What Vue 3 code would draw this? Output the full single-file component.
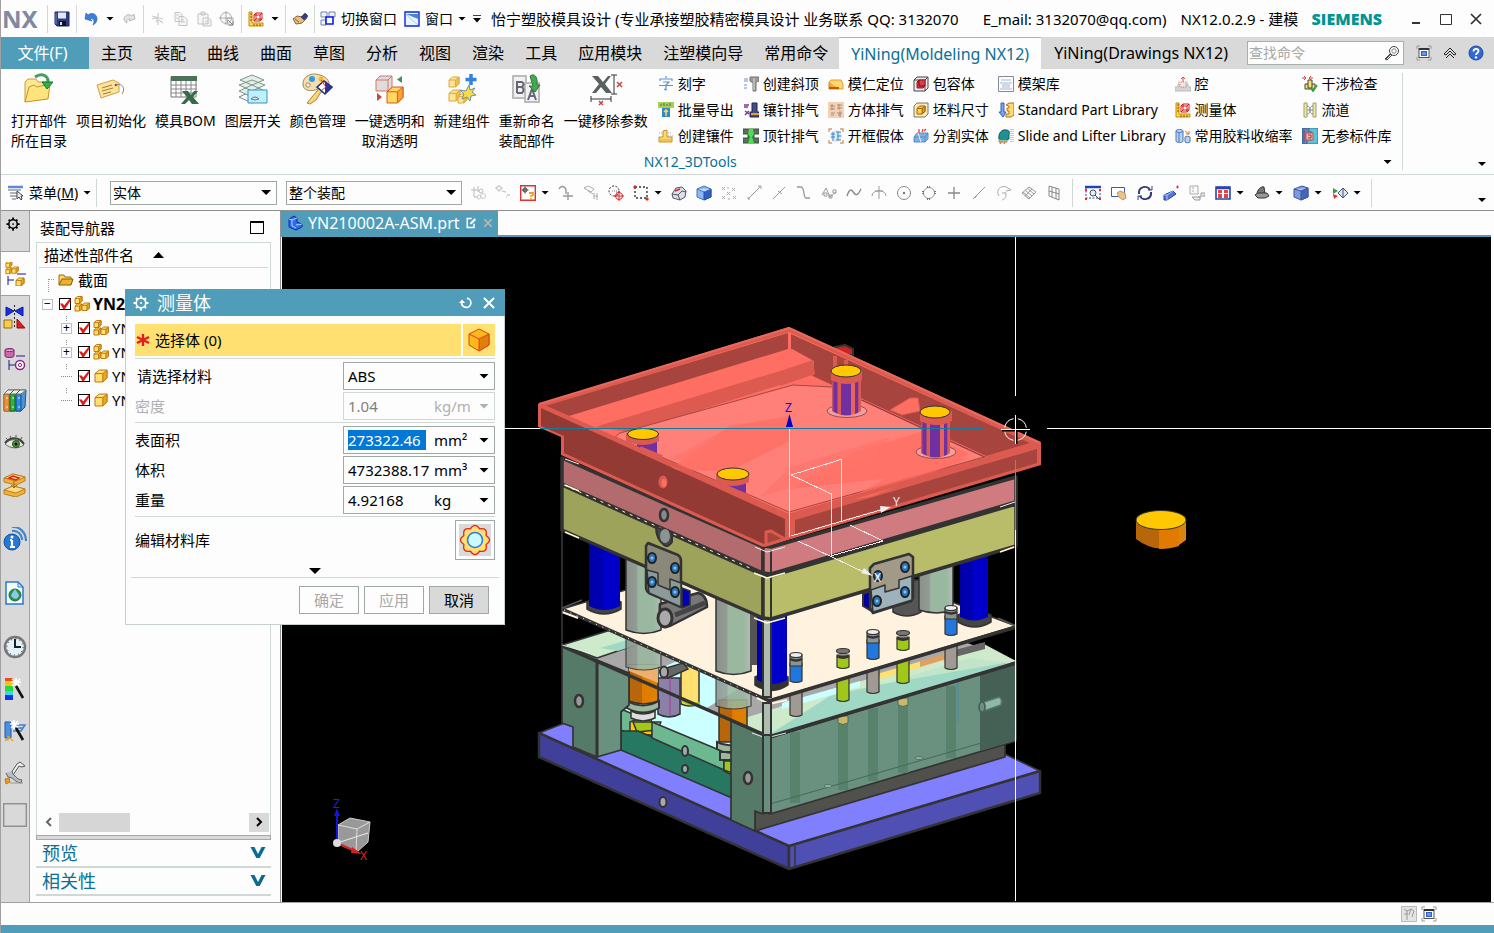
<script setup>
import { ref } from 'vue'

const cube = (x, y, s, a = '#ffe070', b = '#e8a820', c = '#c07810') =>
  `<path d="M${x} ${y + s * 0.3}l${s * 0.35} ${-s * 0.3}h${s * 0.65}v${s * 0.65}l${-s * 0.35} ${s * 0.35}h${-s * 0.65}z" fill="${a}" stroke="${c}"/><path d="M${x + s * 0.65} ${y + s * 0.3}l${s * 0.35} ${-s * 0.3}v${s * 0.65}l${-s * 0.35} ${s * 0.35}z" fill="${b}" stroke="${c}"/><path d="M${x} ${y + s * 0.3}h${s * 0.65}" stroke="${c}"/>`
const asmIcon = cube(1, 0.5, 7) + cube(1, 8, 7) + cube(8, 7, 7.5)
const measureIcon = '<path d="M1 1h3v11h11v3H1z" fill="#ffd94d" stroke="#c98a00"/><path d="M2 3h2M2 6h2M2 9h2M6 13v2M9 13v2M12 13v2" stroke="#8a5200"/><path d="M6 4l2-2h6v6l-2 2H6zM6 4h6v6M12 4l2-2M8 2v6h6M8 8l-2 2" stroke="#d01818"/>'
const frameIcon = '<path d="M1 4V1h3M12 1h3v3M15 12v3h-3M4 15H1v-3" stroke="#999"/><rect x="3" y="3.500" width="10" height="9" fill="#fff" stroke="#555"/><path d="M3 4h10" stroke="#333" stroke-width="2"/><rect x="5.500" y="6.500" width="5" height="4" fill="#5f96f0" stroke="#2d62c8"/>'

const polar = (r, deg) => {
  const a = (deg * Math.PI) / 180
  return `${(16 + r * Math.sin(a)).toFixed(1)} ${(16 - r * Math.cos(a)).toFixed(1)}`
}
const rosette = 'M' + polar(12, -22.5) + Array.from({ length: 8 }, (_, k) => `Q${polar(18, k * 45)} ${polar(12, k * 45 + 22.5)}`).join('') + 'z'

const icons = {
  save: '<path d="M1 1h14v14H3l-2-2z" fill="#2c3c86" stroke="#1d2760"/><path d="M4 1.500h8v6H4z" fill="#e6e9f8" stroke="none"/><path d="M5 10h7v5H5z" fill="#111" stroke="none"/><path d="M6 11h2v3H6z" fill="#ddd" stroke="none"/><path d="M2 2v11" stroke="#7484d8"/>',
  undo: '<path d="M2 8l1-6 2 2c4-3 9-1 9 4 0 3-2 5-4 6 2-4 1-7-3-6l2 2z" fill="#3d7ed8" stroke="#1c57b0" stroke-width=".6"/>',
  redo: '<path d="M14 8l-1-5-2 2c-4-3-8 0-8 3 0 2 1 3 3 4-1-3 1-4 3-4l-1 2z" fill="#e4e4e4" stroke="#bbb"/>',
  cut: '<path d="M2 5l11 3M8 2v12M2 8l3-1 3 1-2 3M9 9l4 3" stroke="#ccc" stroke-width="1.200"/>',
  copy: '<path d="M2 1.500h5l2 2v7H2z M6 5.500h5l3 3v6H6z" fill="#f6f6f6" stroke="#c4c4c4"/><path d="M8 9h3M8 11h4M3 4h3M3 7h2" stroke="#ccc"/>',
  paste: '<path d="M2 3h10v10H2z M5 1h4v3H5z M7 7h5l3 2v6H7z" fill="#f6f6f6" stroke="#c4c4c4"/><path d="M9 10h4M9 12h4" stroke="#ccc"/>',
  move: '<circle cx="7" cy="7" r="5.500" stroke="#aaa"/><path d="M7 0v14M0 7h12M8 7h6v7H9z" stroke="#aaa"/><path d="M9 9l5 5M14 10v4h-4" stroke="#888"/>',
  measure: measureIcon,
  hand: '<path d="M1 8l4-3 5 1 4-3 1 4-5 5-6 1z" fill="#e6bd86" stroke="#8b6330"/><path d="M9 6l4-4 3 3-4 4z" fill="#2c3f98" stroke="#1a2770" stroke-width=".5"/><path d="M3 8l4 3" stroke="#8b6330"/>',
  switch: '<path d="M1 1h6v5H1zM9 1h6v5H9zM1 9h5v5H1z" fill="#eef2fa" stroke="#7088a8"/><path d="M6 6h7v7H6z" fill="#fff" stroke="#0a1cf0" stroke-width="1.600"/>',
  window: '<path d="M1 1h14v14H1z" fill="#eaf4fc" stroke="#0a24e8" stroke-width="1.400"/><path d="M2 3h12v5z" fill="#4a86c8" stroke="none"/><path d="M2 3.500L14 14" stroke="#a8cce8"/>',
  frame: frameIcon,
  up: '<path d="M2 9l6-6 6 6-2 1-4-4-4 4zM4 13l4-4 4 4" stroke="#222"/>',
  help: '<circle cx="8" cy="8" r="7" fill="#2f6bd8" stroke="#1d479c"/><path d="M5.500 6.500c0-3.500 5-3.500 5-.5 0 2-2.500 2-2.500 4" stroke="#fff" stroke-width="1.800"/><circle cx="8" cy="12.400" r="1.200" fill="#fff" stroke="none"/>',
  search: '<circle cx="10" cy="6" r="4.500" stroke="#444"/><circle cx="10" cy="6" r="2.200" stroke="#888"/><path d="M7 9l-5 5M6 9l-5 5 2 1 5-5" stroke="#444"/>',
  char: '<path d="M8 0v2M2 5V3h12v2M5 6h6L8 9v5l-2-1M1 9.500h14" stroke="#5f90d8" stroke-width="1.200"/>',
  batch: '<path d="M0 0h16v6H0z" fill="#a8cc58" stroke="none"/><path d="M3 2v2M6 1v3M9 2v2M12 1v3" stroke="#4f7024"/><path d="M4 6h8v9H4z" fill="#2b8bc8" stroke="none"/><path d="M8 14V8M6 10l2-2 2 2" stroke="#ffd24a" stroke-width="1.600"/>',
  insert: '<path d="M1 14V9h4V3l4-1v7h5v5z" fill="#ffd872" stroke="#c49022"/><path d="M10 5h4M10 8h5M1 5h3" stroke="#aaa" stroke-dasharray="1 1"/><path d="M2 12h12" stroke="#e8a820"/>',
  lifter: '<path d="M7 1h9v4l-3 1v9h-3V7L7 5z" fill="#999" stroke="#777"/><path d="M1 3h4M1 5h4M1 9h3M1 12h3" stroke="#6b93c4"/><path d="M11 2v12" stroke="#ddd"/>',
  needle: '<path d="M9 1h5v9h2v5H7v-5h2z" fill="#454b84" stroke="#23254e"/><path d="M8 12h8" stroke="#d6a52a" stroke-width="2"/><path d="M1 3h5M1 5h4M2 9l4 3M6 9l-4 4" stroke="#7c3a8c" stroke-width="1.500"/>',
  ejector: '<path d="M0 1h16v5h-5v4h5v5H0v-5h5V6H0z" fill="#56705a" stroke="#3b523e"/><path d="M6 1h4l1 5-2 3 2 6H5l2-6-2-3z" fill="#49e050" stroke="none"/>',
  core: '<path d="M1 6h10v7H1z" fill="#f2a93a" stroke="#c98a3a"/><path d="M1 6l2-2h10l2 4v5h-4" fill="#ffd56a" stroke="#d8a040"/><path d="M1 12h10" stroke="#b86000" stroke-width="2"/>',
  vent: '<path d="M0 0h16v16H0z" fill="#f3d1b4" stroke="none"/><path d="M2 4h5M2 7h5M4 2v6M9 3h5M9 6h5M11 2v6M3 11h4M3 13h3M9 11h5M10 13h3M12 9v6" stroke="#a88c78"/>',
  pocket: '<circle cx="8" cy="8" r="6" fill="#dfe9f3" stroke="none"/><path d="M5 4v9M3 6h4M3 9h4M8 4h5M8 12h5M9 8h4M10 4v8" stroke="#3a85c8"/><path d="M1 4V1h3M12 1h3v3M15 12v3h-3M4 15H1v-3" stroke="#c8a078" stroke-width="1.400"/>',
  bound: '<path d="M1 4l3-3h11v11l-3 3H1zM1 4h11v11M12 4l3-3" fill="#eee" stroke="#444"/><path d="M4 6l2-2h6v6l-2 2H4z" fill="#d8414b" stroke="#9a1620"/><path d="M6 4v6h6" stroke="#6e0c14"/>',
  blank: '<path d="M1 4l3-3h11v11l-3 3H1z" fill="#fbe9bd" stroke="#777"/>' + cube(4, 4, 8, '#ffd24a', '#eaa010', '#9a6200'),
  split: '<path d="M1 9l3-4h11v6l-3 3H1z" fill="#7fb0e4" stroke="#5a8cc0"/><path d="M1 9h11v5M12 9l3-4" stroke="#5a8cc0"/><path d="M6 5V1M9 4l1-3M11 3l2-2" stroke="#e23838" stroke-width="1.200"/><path d="M5 5l3 9" stroke="#eef"/>',
  base: '<path d="M.5 .5h15v15H.5z" fill="#fafcff" stroke="#889"/><path d="M3 4h10M2 7h12M4 9h8M4 11h8M2 13h12" stroke="#a8b8cc"/>',
  stdpart: '<path d="M3 1h3v9h2l-3 5-4-5h2z" fill="#7da2e8" stroke="#3a62b8"/><path d="M8 3l3-2h5v12l-3 2H8v-3h3V9H9V6h2V4z" fill="#ffd871" stroke="#a87618"/>',
  slide: '<path d="M1 11C0 5 4 1 8 2c3 0 4 2 3 4v5l-4 1z" fill="#218f93" stroke="#0f5c61"/><path d="M1 12h8v2H1z" fill="#c8e8d0" stroke="#888"/><path d="M2 16l2-3M6 16l1-3" stroke="#e08a20" stroke-width="1.600"/><path d="M13 1v14M15 1v14" stroke="#999" stroke-dasharray="1 1"/>',
  cavity: '<path d="M0 15v-4h3V8h2v3h6V8h2v3h3v4z" fill="#d5d5d5" stroke="#bbb"/><path d="M5 11V6h6v5z" fill="#f6e2e0" stroke="#b99" stroke-dasharray="1 1"/><path d="M8 6V1M6 3l2-2 2 2" stroke="#e25030"/><path d="M3 6h2M11 6h2" stroke="#cc6"/>',
  shrink: '<path d="M1 3c0-2 7-2 7 0v10c0 2-7 2-7 0z" fill="#b8d2f4" stroke="#4a78ba"/><path d="M1 3c0 2 7 2 7 0M4 4v10" stroke="#4a78ba"/><path d="M10 9c0-1 5-1 5 0v5c0 1-5 1-5 0z" fill="#b8d2f4" stroke="#4a78ba"/><path d="M10 3l4 3M14 3v3h-3" stroke="#d87a20"/>',
  interfere: '<path d="M3 8h3V4h4v4h3v5H3z" fill="#f8e070" stroke="#444"/><path d="M6 8v4h4V8" stroke="#444"/><path d="M0 2h4M7 2h4M2 0l2 2-2 2M9 0L7 2l2 2" stroke="#d04545"/><path d="M9 12l2 3 4-6" stroke="#20a830" stroke-width="1.800"/>',
  runner: '<path d="M2 1h3v14H2zM11 1h3v14h-3z" fill="#f4e98c" stroke="#9aa080"/><path d="M5 4c3 0 3 3 3 4s0 4-3 4M11 4c-3 0-3 3-3 4s0 4 3 4M5 8h6" stroke="#889"/>',
  lib: '<path d="M0 0h9v16H0z" fill="#5a86c4" stroke="#33517f"/><path d="M7 0h9v16H5v-4h5V4H7z" fill="#58c4dc" stroke="#3a6f8f"/><path d="M4 5h7v7H4z" fill="#eab4b4" stroke="#c05555"/><path d="M6 7h3v3H6M2 2v12" stroke="#a33"/>',
  menu: '<path d="M0 5h13M2 8h7M2 11h7M4 14h4" stroke="#667" stroke-width="1.200"/><path d="M0 2h15" stroke="#5f88dc" stroke-width="2.500"/><path d="M9 6v8l2-2 2 3 1-1-1-3h2z" fill="#eee" stroke="#444"/>',
  t1: '<path d="M4 2v10h4M1 5h7M8 1v6" stroke="#bbb"/><circle cx="11" cy="6" r="2" stroke="#bbb"/><circle cx="13" cy="11" r="2.500" stroke="#ccc"/><circle cx="9" cy="12" r="2" stroke="#ccc"/>',
  t2: '<path d="M1 3l3 3 3-3-3-2zM7 6l4 1M12 10h3M11 12h1" stroke="#ccc" stroke-width="1.500"/>',
  t3: '<path d="M.7 .7h14.600v14.600H.7z" fill="#fff" stroke="#e03030" stroke-width="1.400"/><circle cx="5" cy="5" r="2" stroke="#444"/><path d="M5 1.500v7M1.500 5h7" stroke="#444"/><path d="M9 8h4v2l-2 1v1M11 13v1" stroke="#f0a020" stroke-width="1.800"/>',
  t4: '<path d="M1 4c2-4 6-3 7 1v4M5 11h10M10 7v8" stroke="#999" stroke-width="1.400"/>',
  t5: '<path d="M1 3l4-2 6 3-3 3zM5 6l5 3M11 8v6M11 11h4M14 8v7" stroke="#aaa"/>',
  t6: '<circle cx="6" cy="6" r="5" stroke="#333" stroke-dasharray="2 1.500"/><path d="M4 6h5v4" stroke="#777" stroke-dasharray="1 1"/><circle cx="11" cy="11" r="3.500" stroke="#e02424"/><path d="M11 6v10M6 11h10" stroke="#e02424"/>',
  t7: '<path d="M2 2h12v11H2z" stroke="#333" stroke-width="1.400" stroke-dasharray="2 2"/><path d="M1 1h2v2H1zM13 13h2v2h-2z" fill="#e02424" stroke="#e02424"/>',
  t8: '<path d="M1 9l4-6 6-1 4 4-1 6-5 3-7-2z" fill="#dbe1e8" stroke="#556"/><path d="M1 9l6 1 4-4 4 1M7 10l2 5" stroke="#556"/><path d="M4 6l5-2" stroke="#d23" stroke-width="1.600"/>',
  t9: '<path d="M1 4l7-3 7 3v8l-7 3-7-3z" fill="#8db8f4" stroke="#4572b8"/><path d="M8 7l7-3v8l-7 3z" fill="#2d61c8" stroke="#274f9c"/><path d="M1 4l7 3 7-3" fill="#c6dcff" stroke="#4572b8"/>',
  t10: '<path d="M1 2l3 3M4 2L1 5M11 3l3 3M14 3l-3 3M6 7l3 3M9 7l-3 3M1 11l3 3M4 11l-3 3M12 11l3 3M15 11l-3 3M7 2v2M8 13v2" stroke="#aaa"/>',
  t11: '<path d="M2 14L14 2M1 13h2v2M12 1h3v3" stroke="#999"/>',
  t12: '<path d="M2 14L14 2M7 6l4 3" stroke="#999"/>',
  t13: '<path d="M1 2h4c4 0 2 11 5 11h4" stroke="#999" stroke-width="1.300"/>',
  t14: '<path d="M1 10L5 3l4 9 6-5M3 8h3v3H3zM8 10h3v3H8zM12 5h3v3h-3z" stroke="#999"/>',
  t15: '<path d="M1 11c3-9 5-6 7-3s4 2 7-4" stroke="#888" stroke-width="1.400"/>',
  t16: '<path d="M1 11C1 4 15 4 15 11M8 1v13M4 6h8" stroke="#999"/>',
  t17: '<circle cx="8" cy="8" r="6.500" stroke="#888"/><circle cx="8" cy="8" r="1.200" fill="#777" stroke="none"/>',
  t18: '<circle cx="8" cy="8" r="5.500" stroke="#999"/><path d="M6 2h4M6 14h4M2 6v4M14 6v4" stroke="#777" stroke-width="2" stroke-dasharray="1 1"/>',
  t19: '<path d="M8 2v12M2 8h12" stroke="#888" stroke-width="1.300"/>',
  t20: '<path d="M2 14L14 2M4 13l2-3" stroke="#999"/>',
  t21: '<path d="M3 11C-1 5 5 0 10 2l5 3-5 1M9 7c2 2 1 7-3 8M6 8h3" stroke="#aaa"/>',
  t22: '<path d="M1 8l7-6 7 5-7 7zM4 5l7 6M6 3l7 6M4 11l7-7M2 7l7 6" stroke="#999"/>',
  t23: '<path d="M3 1l10 3v11L3 11zM3 6l10 3M6 2v10M10 3v11" stroke="#888"/>',
  v1: '<path d="M1 2v11h14V2" fill="#fff" stroke="#2244b8" stroke-dasharray="2 1.500"/><path d="M0 2h16" stroke="#2244b8" stroke-width="2.500"/><circle cx="8" cy="8" r="3" fill="#def" stroke="#456"/><path d="M10 10l4 4" stroke="#456"/><path d="M0 14h2M14 14h2M0 5h2M14 5h2" stroke="#e23" stroke-width="2"/>',
  v2: '<path d="M.5 2.500h13v9H.5z" fill="#fff" stroke="#3a5ab8"/><path d="M6 8l3-2 5 2 1 5-3 2-4-3z" fill="#eac48e" stroke="#c29656"/>',
  v3: '<path d="M2 9c-1-8 9-9 11-4M14 7c1 8-9 9-11 4" stroke="#333c78" stroke-width="2"/><path d="M11 5h4V1M5 11H1v4" fill="none" stroke="#333c78"/>',
  v4: '<path d="M1 10l9-4 3 3-9 6H1z" fill="#5478dc" stroke="#24408f"/><path d="M1 10h3v5M4 10l6-4" stroke="#a9c0ff"/><path d="M13 2h3M14.500 .5v3" stroke="#e03030"/>',
  v5: '<path d="M1 1h8v8H1zM3 3h2M3 6h2" fill="#fafafa" stroke="#aaa"/><path d="M9 12h3V8h4v3h-3M3 12h8v3H6z" fill="#eee" stroke="#999"/>',
  v6: '<path d="M1 2h14v12H1z" fill="#fff" stroke="#2744b0" stroke-width="1.600"/><path d="M1 3h14" stroke="#2744b0" stroke-width="2.500"/><path d="M3 5h4v3H3zM3 9h4v4H3zM9 5h4v3H9zM9 9h4v4H9z" fill="#e24444" stroke="none"/>',
  v7: '<path d="M3 9C3 5 7 1 10 2l1 7z" fill="#777" stroke="#333"/><path d="M1 10l3-2h9l2 3-4 2H4z" fill="#999" stroke="#333"/>',
  v8: '<path d="M1 4l8-3 6 2v9l-7 3-7-3z" fill="#7d9ce0" stroke="#3c58a0"/><path d="M8 6l7-3v9l-7 3z" fill="#4667b8" stroke="#3c58a0"/><path d="M1 4l7 2 7-3" fill="#a8c2f2" stroke="#3c58a0"/>',
  v9: '<path d="M1 3l5 3-5 3z" fill="#30a040" stroke="none"/><path d="M1 9l5 2-4 3z" fill="#d33" stroke="none"/><path d="M6 8l5-5 5 5-5 5z" fill="#dde6f6" stroke="#456"/><path d="M11 3v10" stroke="#456"/>',
  flags: '<path d="M.5 .5h15v15H.5z" fill="#e4e4e4" stroke="#bbb"/><path d="M3 3l3 2v9M6 5l4-2-2 6M10 3l3 2-2 6M3 8h4" stroke="#999"/>',
  asm: asmIcon,
  part: cube(2, 2, 12),
  folder: '<path d="M1 13V3h5l1 2h6v3" fill="#fbd66c" stroke="#9b6d10"/><path d="M1 13l3-6h11l-2 6z" fill="#f0b030" stroke="#8c5c06"/>',
  doc: '<path d="M2 4l5-3 3 2v4l5 2v3l-6 3-7-3z" fill="#2d6bf0" stroke="#0f2cb0"/><path d="M2 4l3 1v6l4 2M5 5l5-2M9 10l6-1" stroke="#b3d0ff"/>',
  edit: '<path d="M9 2H3v12h9V9" stroke="#fff" stroke-width="2"/><path d="M7 9l1-2 5-5 1 2-5 5z" fill="#fff" stroke="#fff"/>',
  x: '<path d="M3 3l10 10M13 3L3 13" stroke="currentColor" stroke-width="2"/>',
  reset: '<path d="M3 7.500a5.300 5.300 0 1 0 6-5" stroke="#fff" stroke-width="2"/><path d="M0 8l3.500-4L7 8z" fill="#fff" stroke="none"/>',
  gear: '<circle cx="8" cy="8" r="4.800" stroke="currentColor" stroke-width="1.700"/><circle cx="8" cy="8" r="1" fill="currentColor" stroke="none"/><path d="M8 .5v3M8 12.500v3M.5 8h3M12.500 8h3M3 3l1.500 1.500M11.500 11.500L13 13M13 3l-1.500 1.500M4.500 11.500L3 13" stroke="currentColor" stroke-width="2"/>',
  chevron: '<path d="M.5 2h4L8 9l3.500-7h4L9.700 13H6.300z" fill="#0a6c92" stroke="none"/>',
}

const bigIcons = {
  open: '<path d="M3 29V9l3-3h8l2 3h9v6" fill="#fbe796" stroke="#c9a030"/><path d="M3 29l4-15 5-2 3 2 13-3-2 15z" fill="#ffe37d" stroke="#c59524"/><path d="M13 4c7-5 14-1 13 6" stroke="#4c9a62" stroke-width="3"/><path d="M20 9h11l-6 7z" fill="#2bb34a" stroke="#17762b"/>',
  tag: '<path d="M3 12l16-5 6 3v9L7 25z" fill="#fce39a" stroke="#d0a044"/><path d="M8 15l10-3M8 18l11-3M9 21l8-2" stroke="#a47b3a"/><circle cx="22" cy="12" r="1.300" fill="#b33" stroke="none"/><path d="M22 12c6-3 10 4 6 9" stroke="#888"/>',
  bom: '<path d="M3 4h25v20H3z" fill="#fff" stroke="#777"/><path d="M3 3h26v5H3z" fill="#4c7257" stroke="none"/><path d="M3 12h26M3 16h26M3 20h26M8 8v16M13 8v16M18 8v16M23 8v16" stroke="#888"/><path d="M14 18h6l3 4 3-4h4l-5 6 6 7h-7l-3-4-4 4h-4l6-7z" fill="#37694a" stroke="none"/>',
  layers: '<path d="M3 24l13-6 13 6-13 6z" fill="#f4f8f6" stroke="#789"/><path d="M3 18l13-6 13 6-13 6zM3 12l13-5 13 5-13 6zM4 7l12-5 12 5-12 5z" fill="#e3efe8" stroke="#7c958a"/><path d="M12 17h19v13H12z" fill="#bdf0fa" stroke="#3a93c4"/><path d="M15 26q4-4 8 0-4 2-8 0z" fill="#d8e8f0" stroke="#678"/>',
  palette: '<path d="M2 12C1 3 11-1 19 2c8 2 11 9 8 12-3 2-6-1-9 1-3 3-15 5-16-3z" fill="#f2dfb1" stroke="#a88a50"/><circle cx="11" cy="6" r="3" fill="#2e9be0" stroke="none"/><circle cx="20" cy="6" r="2.500" fill="#f3b728" stroke="none"/><circle cx="7" cy="12" r="2.200" fill="#eee" stroke="#a88a50"/><path d="M20 12l-4 6-10 12 3 1 6-4 5-8 6-1z" fill="#f8d674" stroke="#ad8438"/><path d="M16 14l7-6 8 6-7 7z" fill="#fff" stroke="#222a7c" stroke-width="1.600"/><path d="M24 8l7 6-7 7z" fill="#2b3590" stroke="none"/><path d="M20 7l5 7-4 3" stroke="#e43232"/>',
  transp: '<path d="M3 7l4-4h12v11l-4 4H3zM3 7h12v11M15 7l4-4" fill="#ddd" stroke="#d77762"/>' + cube(14, 14, 16, '#ffd85f', '#f6a433', '#d8582c') + '<path d="M29 3v7l-5-3.500z" fill="#3e9150" stroke="none"/><path d="M4 20v8l5-4z" fill="#c84a3a" stroke="none"/>',
  newcomp: cube(4, 4, 10, '#ffe591', '#f4bd45', '#d8a84a') + cube(4, 17, 11, '#ffe591', '#f4bd45', '#d8a84a') + cube(13, 21, 9, '#ffe591', '#f4bd45', '#d8a84a') + '<path d="M26 1v11M20.500 6.500h11" stroke="#3381e0" stroke-width="3.500"/><path d="M24 12l1 5 5-2-3 4 4 3-5 1-1 5-3-4-5 2 2-5-4-4 6 1z" fill="#ffdc3c" stroke="#6595a8"/>',
  rename: '<path d="M3 3h13v22H3z" fill="#f1f1f1" stroke="#bbb" stroke-width="2"/><path d="M15 10h14v19H15z" fill="#f1f1f1" stroke="#bbb" stroke-width="2"/><path d="M7 20V9h5q3 2 0 5 3 3 0 6H7M8 14h4" stroke="#667" stroke-width="2"/><path d="M18 27l4-11 4 11M20 23h4" stroke="#667" stroke-width="2"/><path d="M20 3c4-3 8 0 7 9h3l-5 7-6-6h4z" fill="#3cae4d" stroke="#3d6b45"/>',
  remove: '<path d="M3 3h6l5 6 5-6h3l-6 8 7 9h-6l-5-6-5 6H3l7-9z" fill="#5a625f" stroke="none"/><path d="M22 2h6M25 2v19M22 21h6M2 26h20M2 23v6M22 23v6" stroke="#333"/><path d="M28 9l5 5M33 9l-5 5M10 28l4 4M14 28l-4 4" stroke="#d04646" stroke-width="1.600"/>',
}

const railIcons = {
  gear: '<g transform="translate(3 3) scale(.88)">' + icons.gear + '</g>',
  nav: '<g transform="translate(1 -1) scale(.85)">' + asmIcon + '</g><path d="M4 14v9M4 18h6M13 12h9" stroke="#1010b0"/>' + cube(12, 16, 8),
  constraint: '<path d="M3 2l8 4-8 5zM20 2l-8 4 8 5z" fill="#1530e8" stroke="#0a1aa0"/><path d="M11.500 0v24" stroke="#222" stroke-dasharray="2 2"/><path d="M1 15h8v8H1z" fill="#f7cd50" stroke="#9c6a08"/><path d="M14 14l8 9h-8z" fill="#dc2022" stroke="#8c0c10"/>',
  feature: '<path d="M2 3c0-2 9-2 9 0v6c0 2-9 2-9 0z" fill="#c86aa8" stroke="#7c2468"/><path d="M2 3c0 2 9 2 9 0" fill="#f0b8e0" stroke="#7c2468"/><path d="M13 9h9M6 13v10M6 18h6" stroke="#1a1a90"/><circle cx="17" cy="18" r="4.500" fill="#fff" stroke="#8c2480" stroke-width="1.500"/><circle cx="17" cy="18" r="1.600" stroke="#8c2480"/>',
  books: '<path d="M1 5l4-4h18l-1 17-4 4H1z" fill="#4d94d8" stroke="#24548c"/><path d="M1 5h5v17H1z" fill="#e89434" stroke="#b86c2c"/><path d="M7 5h5v17H7z" fill="#2fb243" stroke="#12671f"/><path d="M13 5h5v17h-5z" fill="#2f8de0" stroke="#154c90"/><path d="M1 5l4-4h18l-5 4z" fill="#f3efe0" stroke="#777"/><path d="M7 5l4-4M13 5l4-4" stroke="#555"/><path d="M3 9h2M9 9h2M15 9h2M3 18h2M9 18h2M15 18h2" stroke="#eee"/>',
  eye: '<path d="M2 13c5-6 14-6 19 1-6 4-13 4-19-1z" fill="#e8e8e0" stroke="#666"/><path d="M2 12c5-6 14-7 19 1" stroke="#444" stroke-width="2"/><circle cx="13" cy="13" r="3.500" fill="#4c9a34" stroke="#24501c"/><circle cx="13" cy="13" r="1.500" fill="#111" stroke="none"/><path d="M5 9L3 7M8 7L7 5M13 6V4M18 8l1-2" stroke="#555"/>',
  stack: '<path d="M1 5l9-4 12 3v4l-9 4-12-3z" fill="#f0b23c" stroke="#b8801c"/><path d="M1 17l9-4 12 3v4l-9 4-12-3z" fill="#f0b23c" stroke="#b8801c"/><path d="M1 5l9-4 12 3-9 4zM1 17l9-4 12 3-9 4z" fill="#ffdc82" stroke="#b8801c"/><path d="M6 5l4-2 6 2-3 2z" stroke="#e02020" stroke-width="1.500"/><path d="M11 8v6M8 12l3 3 3-3" stroke="#a06a10"/>',
  info: '<circle cx="9" cy="15" r="8" fill="#2578d8" stroke="#1a4e98"/><path d="M9 13v7M7 13h2M7 20h5" stroke="#fff" stroke-width="2.200"/><circle cx="9" cy="10" r="1.500" fill="#fff" stroke="none"/><path d="M9 4c6-1 10 4 10 9M9 0c8-1 14 6 14 14" stroke="#4487c8" stroke-width="2.200"/>',
  page: '<path d="M3 1h12l5 5v17H3z" fill="#f7fcff" stroke="#2879cc" stroke-width="1.500"/><path d="M15 1v5h5" stroke="#2879cc"/><circle cx="12" cy="14" r="6" fill="#289346" stroke="#1c6e34"/><path d="M8 14l4-6 4 6c0 5-7 5-8 0z" fill="#8bc8ec" stroke="none"/>',
  clock: '<circle cx="12" cy="12" r="10" fill="#e4f2f8" stroke="#777" stroke-width="2.500"/><circle cx="12" cy="12" r="8" fill="none" stroke="#333" stroke-dasharray="1 3.200"/><path d="M12 4v8h6" stroke="#123" stroke-width="2"/>',
  rainbow: '<path d="M2 1h8v4H2z" fill="#f04a18" stroke="none"/><path d="M2 4h8v5H2z" fill="#f3c510" stroke="none"/><path d="M2 9h8v5H2z" fill="#28d83e" stroke="none"/><path d="M2 14h8v4H2z" fill="#2bdde8" stroke="none"/><path d="M2 18h8v5H2z" fill="#1532e8" stroke="none"/><path d="M13 1v9M8 5h10M9 2l8 7M17 2L9 9" stroke="#fff" stroke-width="1.500"/><path d="M13 9l7 12" stroke="#111" stroke-width="2.600"/>',
  wizard: '<path d="M2 3h6v16H2z" fill="#4d92e2" stroke="#1d59a8"/><path d="M12 6h10l-4 6h-8M12 9h8" stroke="#3b82d4" stroke-width="1.500"/><path d="M11 1v9M7 5h9M8 2l7 7M15 2L8 9" stroke="#fff" stroke-width="1.500"/><path d="M13 9l7 12" stroke="#111" stroke-width="2.600"/><path d="M2 22l4-4 4 4M5 17v5" stroke="#e6a720" stroke-width="1.200"/>',
  tools: '<path d="M8 12l6-9 3-2 5 4-3 1-3-1-6 9" fill="#eef4ea" stroke="#555"/><path d="M3 12l2 4 4 1 5 4 4 1 1-3-4-1-5-5-1-3" fill="#b6bdc6" stroke="#666"/><path d="M2 18l4-1 1 4-4 2z" fill="#f29a20" stroke="#c08020"/><path d="M7 22h13" stroke="#999"/>',
  blank: '<path d="M.7 .7h22.600v22.600H.7z" fill="none" stroke="#919191" stroke-width="1.400"/>',
}

const tabs = ['主页', '装配', '曲线', '曲面', '草图', '分析', '视图', '渲染', '工具', '应用模块', '注塑模向导', '常用命令', 'YiNing(Moldeling NX12)', 'YiNing(Drawings NX12)']
const activeTab = ref('YiNing(Moldeling NX12)')

const bigTools = [
  ['open', '打开部件', '所在目录'], ['tag', '项目初始化'], ['bom', '模具BOM'], ['layers', '图层开关'],
  ['palette', '颜色管理'], ['transp', '一键透明和', '取消透明'], ['newcomp', '新建组件'],
  ['rename', '重新命名', '装配部件'], ['remove', '一键移除参数'],
]
const smallTools = [
  [['char', '刻字'], ['batch', '批量导出'], ['insert', '创建镶件']],
  [['lifter', '创建斜顶'], ['needle', '镶针排气'], ['ejector', '顶针排气']],
  [['core', '模仁定位'], ['vent', '方体排气'], ['pocket', '开框假体']],
  [['bound', '包容体'], ['blank', '坯料尺寸'], ['split', '分割实体']],
  [['base', '模架库'], ['stdpart', 'Standard Part Library'], ['slide', 'Slide and Lifter Library']],
  [['cavity', '腔'], ['measure', '测量体'], ['shrink', '常用胶料收缩率']],
  [['interfere', '干涉检查'], ['runner', '流道'], ['lib', '无参标件库']],
]
const selTools = Array.from({ length: 23 }, (_, i) => ({ n: 't' + (i + 1), c: i === 2 || i === 6 }))
const viewTools = Array.from({ length: 9 }, (_, i) => ({ n: 'v' + (i + 1), c: i > 4 }))
const railGroups = [
  ['constraint', 'feature', 'books', 'eye', 'stack'], ['info'], ['page'], ['clock', 'rainbow', 'wizard', 'tools', 'blank'],
]
const tree = ref([
  { t: 'YN', i: 'asm', x: true, on: true }, { t: 'YN', i: 'asm', x: true, on: true },
  { t: 'YN', i: 'part', x: false, on: true }, { t: 'YN', i: 'part', x: false, on: true },
])
const rootOn = ref(true)
const filter = ref('实体')
const scope = ref('整个装配')
const material = ref('ABS')
const measures = ref([
  { id: 'area', label: '表面积', value: '273322.46', unit: 'mm²', hl: true },
  { id: 'volume', label: '体积', value: '4732388.17', unit: 'mm³' },
  { id: 'weight', label: '重量', value: '4.92168', unit: 'kg' },
])

const bluePins = [[796, 655], [873, 632], [951, 608]]
const greenPins = [[843, 651], [903, 633]]
const bolts = [[652, 558], [675, 568], [652, 582], [675, 592], [878, 576], [905, 567], [877, 601], [905, 592]]
</script>

<template>
  <div class="app">
    <header class="titlebar">
      <span class="nx">NX</span>
      <div class="grp"><button class="ib" aria-label="保存"><svg class="i" viewBox="0 0 16 16" v-html="icons.save" /></button></div>
      <div class="grp">
        <button class="ib" aria-label="撤消"><svg class="i" viewBox="0 0 16 16" v-html="icons.undo" /></button>
        <button class="ib" aria-label="撤消列表"><i class="caret" /></button>
        <button class="ib" aria-label="重做"><svg class="i" viewBox="0 0 16 16" v-html="icons.redo" /></button>
      </div>
      <div class="grp">
        <button v-for="n in ['cut', 'copy', 'paste', 'move']" :key="n" class="ib" :aria-label="n"><svg class="i" viewBox="0 0 16 16" v-html="icons[n]" /></button>
      </div>
      <div class="grp">
        <button class="ib" aria-label="测量"><svg class="i" viewBox="0 0 16 16" v-html="icons.measure" /></button>
        <button class="ib" aria-label="测量列表"><i class="caret" /></button>
      </div>
      <div class="grp"><button class="ib" aria-label="触控"><svg class="i" viewBox="0 0 16 16" v-html="icons.hand" /></button></div>
      <div class="grp windows">
        <button class="ib"><svg class="i" viewBox="0 0 16 16" v-html="icons.switch" />切换窗口</button>
        <button class="ib"><svg class="i" viewBox="0 0 16 16" v-html="icons.window" />窗口<i class="caret" /></button>
        <button class="ib" aria-label="工具条选项"><i class="caret bar" /></button>
      </div>
      <h1 class="title"><span>怡宁塑胶模具设计 (专业承接塑胶精密模具设计 业务联系 QQ: 3132070</span><span>E_mail: 3132070@qq.com)</span><span class="ver">NX12.0.2.9 - 建模</span></h1>
      <span class="siemens">SIEMENS</span>
      <div class="winbtns">
        <button class="ib" aria-label="最小化"><svg class="i" viewBox="0 0 16 16"><path d="M4 12h8" stroke="#333" stroke-width="2" /></svg></button>
        <button class="ib" aria-label="最大化"><svg class="i" viewBox="0 0 16 16"><path d="M2.500 3.500h11v10h-11z" stroke="#333" /></svg></button>
        <button class="ib" aria-label="关闭"><svg class="i" viewBox="0 0 16 16"><path d="M3 3l10 10M13 3L3 13" stroke="#333" stroke-width="1.700" /></svg></button>
      </div>
    </header>

    <nav class="tabbar">
      <button class="file">文件(F)</button>
      <button v-for="t in tabs" :key="t" class="tab" :class="{ active: t === activeTab, latin: t.startsWith('Yi') }" @click="activeTab = t">{{ t }}</button>
      <div class="find">
        <label class="search"><input type="search" placeholder="查找命令" aria-label="查找命令"><svg class="i" viewBox="0 0 16 16" v-html="icons.search" /></label>
        <button v-for="n in ['frame', 'up', 'help']" :key="n" class="ib" :aria-label="n"><svg class="i" viewBox="0 0 16 16" v-html="icons[n]" /></button>
      </div>
    </nav>

    <section class="ribbon">
      <div class="rgroup">
        <div class="tools">
          <button v-for="b in bigTools" :key="b[0]" class="big">
            <svg class="bi" viewBox="0 0 34 34" v-html="bigIcons[b[0]]" />
            <span>{{ b[1] }}</span><span v-if="b[2]">{{ b[2] }}</span>
          </button>
          <div v-for="(col, k) in smallTools" :key="k" class="col">
            <button v-for="s in col" :key="s[0]" class="small"><svg class="i" viewBox="0 0 16 16" v-html="icons[s[0]]" /><span>{{ s[1] }}</span></button>
          </div>
        </div>
        <div class="gname"><span>NX12_3DTools</span><button class="ib" aria-label="组选项"><i class="caret" /></button></div>
      </div>
      <button class="ib ropt" aria-label="功能区选项"><i class="caret" /></button>
    </section>

    <section class="toolbar">
      <button class="menu"><svg class="i" viewBox="0 0 16 16" v-html="icons.menu" /><span>菜单(<u>M</u>)</span><i class="caret" /></button>
      <label class="sel flt"><select v-model="filter" aria-label="类型过滤器"><option>实体</option></select></label>
      <label class="sel scp"><select v-model="scope" aria-label="选择范围"><option>整个装配</option></select></label>
      <div class="icons">
        <button v-for="t in selTools" :key="t.n" class="ib" :aria-label="t.n"><svg class="i" viewBox="0 0 16 16" v-html="icons[t.n]" /><i v-if="t.c" class="caret" /></button>
      </div>
      <div class="icons views">
        <button v-for="t in viewTools" :key="t.n" class="ib" :aria-label="t.n"><svg class="i" viewBox="0 0 16 16" v-html="icons[t.n]" /><i v-if="t.c" class="caret" /></button>
      </div>
      <button class="ib topt" aria-label="边框条选项"><i class="caret" /></button>
    </section>

    <main class="work">
      <aside class="rail">
        <button class="rb first" aria-label="选项"><svg class="ri" viewBox="0 0 24 24" v-html="railIcons.gear" /></button>
        <button class="rb on" aria-label="装配导航器"><svg class="ri" viewBox="0 0 24 24" v-html="railIcons.nav" /></button>
        <div v-for="(g, k) in railGroups" :key="k" class="rg">
          <button v-for="n in g" :key="n" class="rb" :aria-label="n"><svg class="ri" viewBox="0 0 24 24" v-html="railIcons[n]" /></button>
        </div>
      </aside>

      <aside class="panel">
        <div class="phead"><h2>装配导航器</h2><button class="pmax" aria-label="最大化" /></div>
        <div class="box">
          <div class="thead">描述性部件名 <i class="tri" /></div>
          <ul class="tree">
            <li class="sect"><i class="elbow" /><svg class="i" viewBox="0 0 16 16" v-html="icons.folder" />截面</li>
            <li class="root"><button class="pm">−</button><input v-model="rootOn" type="checkbox" aria-label="YN2"><svg class="i" viewBox="0 0 16 16" v-html="icons.asm" /><b>YN2</b></li>
            <li v-for="(r, k) in tree" :key="k" class="kid">
              <button v-if="r.x" class="pm">+</button><i v-else class="dots" />
              <input v-model="r.on" type="checkbox" :aria-label="r.t + k"><svg class="i" viewBox="0 0 16 16" v-html="icons[r.i]" />{{ r.t }}
            </li>
          </ul>
          <div class="hscroll">
            <button aria-label="向左"><svg viewBox="0 0 16 16"><path d="M10 4L6 8l4 4" stroke="#666" stroke-width="2" /></svg></button>
            <i class="thumb" />
            <button class="r" aria-label="向右"><svg viewBox="0 0 16 16"><path d="M6 4l4 4-4 4" stroke="#000" stroke-width="2" /></svg></button>
          </div>
        </div>
        <div class="split" />
        <button class="acc">预览<svg class="i" viewBox="0 0 16 16" v-html="icons.chevron" /></button>
        <button class="acc">相关性<svg class="i" viewBox="0 0 16 16" v-html="icons.chevron" /></button>
      </aside>

      <section class="view">
        <div class="doctabs">
          <button class="doctab"><svg class="i" viewBox="0 0 16 16" v-html="icons.doc" />YN210002A-ASM.prt<svg class="i s" viewBox="0 0 16 16" v-html="icons.edit" /><svg class="i s g" viewBox="0 0 16 16" v-html="icons.x" /></button>
        </div>
        <svg class="canvas" viewBox="282 237 1209 664" preserveAspectRatio="xMinYMin meet">
          <defs>
            <linearGradient id="post"><stop offset="0" stop-color="#8a918a" /><stop offset=".3" stop-color="#929b94" /><stop offset=".35" stop-color="#9ab8a0" /><stop offset=".8" stop-color="#9ab8a0" /><stop offset="1" stop-color="#b5bdb5" /></linearGradient>
            <linearGradient id="blue"><stop offset="0" stop-color="#0000a8" /><stop offset=".45" stop-color="#0000b4" /><stop offset=".5" stop-color="#0000d0" /><stop offset="1" stop-color="#0000c4" /></linearGradient>
            <linearGradient id="orange"><stop offset="0" stop-color="#b8660c" /><stop offset=".45" stop-color="#b8660c" /><stop offset=".46" stop-color="#e07b00" /><stop offset="1" stop-color="#dc8200" /></linearGradient>
            <linearGradient id="purple"><stop offset="0" stop-color="#dc5a50" /><stop offset=".08" stop-color="#7030a0" /><stop offset=".18" stop-color="#7030a0" /><stop offset=".2" stop-color="#dc5a50" /><stop offset=".3" stop-color="#dc5a50" /><stop offset=".32" stop-color="#7030a0" /><stop offset=".65" stop-color="#7030a0" /><stop offset=".67" stop-color="#e8645a" /><stop offset=".78" stop-color="#e8645a" /><stop offset=".8" stop-color="#7030a0" /><stop offset=".9" stop-color="#7030a0" /><stop offset=".92" stop-color="#dc5a50" /></linearGradient>
          </defs>
          <g stroke="#333" stroke-width="1.500" stroke-linejoin="round">
            <path d="M539 733L562 724 789 650 1040 771 789 846z" fill="#8080ff" />
            <path d="M539 733L789 846V869L539 757z" fill="#40409a" stroke-width="2.500" />
            <path d="M789 846L1040 771V793L789 869z" fill="#5050b4" stroke-width="2.500" />
            <path d="M795 846V866" stroke-width="1.500" />
            <ellipse cx="663" cy="802" rx="3.500" ry="5" fill="#aaa" stroke-width="2" />

            <path d="M620 700L700 650 790 680 732 735V780L620 730z" fill="#ccffff" stroke="none" />
            <path d="M621 709L651 722V745L621 730z" fill="#6cb890" />
            <path d="M630 722L651 714 652 735 630 734z" fill="#ffc800" />
            <path d="M633 722h28l-4 8-20 2z" fill="#a0c818" />
            <path d="M621 731L638 731 652 737 732 770V798L621 750z" fill="#267860" />
            <path d="M652 722L724 752V770L652 738z" fill="#6cb890" />
            <path d="M724 755l8 4v16l-8-4z" fill="#ffc800" />
            <ellipse cx="685" cy="751" rx="3" ry="5" fill="#9aa" stroke-width="2" /><ellipse cx="685" cy="769" rx="3" ry="4" fill="#9aa" stroke-width="2" />

            <path d="M562 645L789 577 1016 661 767 736z" fill="#a8a8a8" stroke="none" />
            <path d="M640 677L698 652 770 670 700 712z" fill="#ccffff" stroke="none" />
            <path d="M562 645L640 621 668 634 597 658z" fill="#cdeacb" /><path d="M600 648l55-16 8 4-45 15z" fill="#a0d8c6" stroke="none" />
            <path d="M732 722L982 643 1016 661 767 738z" fill="#cdeacb" stroke="none" />
            <path d="M770 734l60-38 60-14 80-24 46 6-240 72z" fill="#a0d8c6" stroke="none" />
            <path d="M775 712l88-26 55-16 60-25 38 16-230 40z" fill="#cdeacb" stroke="none" opacity=".75" />
            <path d="M782 703L860 681v6l-78 22z" fill="#ccffff" stroke="none" /><path d="M880 673l42-12v6l-42 12z" fill="#ffe070" stroke="none" /><path d="M920 661l30-9v6l-30 9z" fill="#e0a060" stroke="none" /><path d="M955 650l30-8v7l-30 8z" fill="#666" stroke="none" />
          </g>

          <g stroke="#333" stroke-width="1.500">
            <path d="M658 678h22v36q-11 6-22 0z" fill="#8a80a8" /><path d="M670 678v38" stroke="#a05098" />
            <path d="M681 660h18v44q-9 4-18 0z" fill="#ffe070" /><path d="M682 700q8 6 18 3" stroke="#a0c818" stroke-width="3" fill="none" />
            <path d="M629 665h29v36q-14 6-29 0z" fill="url(#orange)" /><path d="M629 665h29v18l-29-12z" fill="#ecb070" stroke="none" />
            <path d="M627 701q16 9 32 0v7q-16 9-32 0z" fill="#9ab89c" stroke-width="2" /><path d="M631 711q12 6 24 0v7q-12 6-24 0z" fill="#ddd" />
            <path d="M719 700h28v42h-28z" fill="url(#orange)" /><path d="M717 742q8 4 15 3v8q-8 0-15-4zM720 752h12v8h-12z" fill="#9ab89c" stroke-width="2" />
            <path d="M724 761h8v12l-8-3z" fill="#a0c818" />
          </g>

          <g stroke="#333" stroke-width="1.700" stroke-linejoin="round">
            <path d="M562 646L597 660V757L573 747V727L562 723z" fill="#567a68" />
            <path d="M597 660L629 673V705L621 712V750L597 757z" fill="#6a9080" />
            <path d="M597 660V757" stroke-width="3" />
            <ellipse cx="579" cy="701" rx="4" ry="6" fill="#999" stroke-width="2.500" />
            <path d="M755 812L1005 742V757L755 831z" fill="#50504c" />
            <path d="M731 721L763 735V814L755 811V831L731 820z" fill="#567a68" />
            <path d="M770 738L1016 663V741L770 814 763 812V735z" fill="#6a9080" />
            <path d="M980 675L1016 664V740L980 751z" fill="#456055" stroke="none" />
            <g fill="#58826c" stroke="none"><path d="M790 732h10v71h-10zM838 718h10v72h-10zM868 708h10v73h-10zM898 700h10v73h-10zM946 686h10v72h-10z" /></g>
            <g fill="#c8b868" stroke="#45685c" stroke-width="1"><path d="M838 716h10v7q-5 3-10 0zM898 698h10v7q-5 3-10 0z" /></g>
            <path d="M770 804L1016 733" stroke="#45685c" stroke-width="1" /><path d="M958 680v42" stroke="#3a8fb0" stroke-width="1" />
            <ellipse cx="828" cy="786" rx="4" ry="1.500" fill="#8fb8aa" stroke="#557468" stroke-width="1" /><ellipse cx="919" cy="758" rx="4" ry="1.500" fill="#8fb8aa" stroke="#557468" stroke-width="1" />
            <ellipse cx="748" cy="778" rx="4" ry="6" fill="#999" stroke-width="2.500" />
            <path d="M981 703l18-6q4 2 2 8l-17 6q-5-2-3-8z" fill="#8fb8aa" stroke="#557468" /><ellipse cx="982" cy="707" rx="3" ry="5" fill="#6a9080" stroke="#456055" />
            <path d="M562 646L765 735Q768 738 772 736L1016 663" fill="none" stroke-width="3.500" />
            <path d="M562 645L590 653M752 733l14 5 20-5" stroke="#d8f0e0" stroke-width="1" fill="none" />
          </g>

          <g stroke="#333" stroke-width="1.200">
            <g v-for="p in [...bluePins, [843, 640], [903, 622]]" :key="p[0]"><path :d="`M${p[0] - 6} ${p[1] + 28}h12v32q-6 3-12 0z`" :fill="p[0] === 843 || p[0] === 903 ? '#a0c818' : '#a09a92'" /></g>
            <path d="M626 630h35v37q-17 6-35 0z" fill="url(#post)" opacity=".85" /><path d="M716 660h35v46q-17 6-35 0z" fill="url(#post)" opacity=".85" />
            <path d="M663 669l20-6 5 6-20 9z" fill="#666" stroke-width="1.500" /><ellipse cx="664" cy="672" rx="4" ry="5.500" fill="#aaa" stroke-width="2" />
          </g>

          <g stroke="#333" stroke-width="1.500" stroke-linejoin="round">
            <path d="M562 609L789 541 1016 626 767 701z" fill="#fff3df" />
            <path d="M562 609L765 699Q768 701 772 700L1016 627" fill="none" stroke-width="3.500" />
            <path d="M564 610L760 697" stroke="#fff" stroke-width="1" stroke-dasharray="1 6" /><path d="M562 608l20-8M998 618l18 8" stroke="#555" fill="none" />
            <path d="M757 698l12 6 18-4M562 612l16 6" stroke="#fff3df" stroke-width="2" fill="none" />

            <path d="M893 580h28v32q-14 8-28 0z" fill="#555" /><path d="M919 560h34v50q-16 6-34 0z" fill="url(#post)" />
            <path d="M587 602q17-8 34 0v7q-17 10-34 0z" fill="#444" /><path d="M589 540h31v66q-15 8-31 0z" fill="url(#blue)" stroke="none" />
            <path d="M958 615q17-8 33 0v7q-16 10-33 0z" fill="#444" /><path d="M960 550h28v67q-14 7-28 0z" fill="url(#blue)" stroke="none" />
            <path d="M626 550h35v80q-17 7-35 0z" fill="url(#post)" /><path d="M716 590h35v81q-17 7-35 0z" fill="url(#post)" />
            <path d="M755 677q17-8 33 0v8q-16 11-33 0z" fill="#333" /><path d="M757 615h30v65q-15 8-30 0z" fill="url(#blue)" stroke="none" />
            <path d="M751 600h6v65h-6z" fill="#555" stroke="none" />
            <path d="M660 604l38-11q9 2 9 14l-37 19q-12-4-10-22z" fill="#777" stroke-width="2.500" /><path d="M675 615l30-12" stroke="#444" stroke-width="5" /><ellipse cx="665" cy="618" rx="7" ry="9" fill="#aaa" stroke-width="3" />
          </g>

          <g stroke="#333" stroke-width="1.200">
            <g v-for="p in bluePins" :key="p[0]"><path :d="`M${p[0] - 6} ${p[1] + 8}h12v18q-6 3-12 0z`" fill="#2277dc" /><path :d="`M${p[0] - 6} ${p[1]}h12v11h-12z`" fill="#8a9490" /><ellipse :cx="p[0]" :cy="p[1]" rx="6" ry="2.500" fill="#eee" /><path :d="`M${p[0] - 6} ${p[1] + 4}q6 3 12 0`" stroke-width="2.500" fill="none" /></g>
            <g v-for="p in greenPins" :key="p[0]"><path :d="`M${p[0] - 6} ${p[1] + 4}h12v12q-6 3-12 0z`" fill="#a0c818" /><ellipse :cx="p[0]" :cy="p[1]" rx="6.500" ry="2.500" fill="#777" /><path :d="`M${p[0] - 6} ${p[1] + 5}q6 3 12 0`" stroke-width="3" fill="none" /></g>
            <path d="M763 618h8v79h-8zM763 703h8v32h-8z" fill="#aebdae" stroke-width="2" /><path d="M763 735h8v78h-8z" fill="#6a9080" stroke-width="2" />
            <path d="M562 530V646M1016 546V740" stroke="#4a4a4a" />
          </g>

          <g stroke="#333" stroke-width="3.500" stroke-linejoin="round">
            <path d="M562 485L763 575V618L562 530z" fill="#9ea35c" /><path d="M771 576L1016 504V546L771 619 763 618V575z" fill="#b9bd69" />
            <path d="M562 458L763 547V573L562 484z" fill="#b36b6e" /><path d="M771 547L1016 477V502L771 574 763 573V546z" fill="#cf7b80" />
            <path d="M771 550V618M763 550V618" stroke-width="2" />
            <path d="M564 485L752 569" stroke="#fff8c0" stroke-width="1" stroke-dasharray="3 5" />
            <path d="M565 459l14 5M755 547l12 5 18-5M1000 507l15-5" stroke="#eee" stroke-width="1" /><path d="M565 485l14 6M754 573l13 5 18-5M565 532l14 6M1000 552l14-5M754 618l13 5 18-5" stroke="#fffbd0" stroke-width="1.500" fill="none" />
            <ellipse cx="664" cy="515" rx="4" ry="6" fill="#888" stroke-width="2.500" /><path d="M656 527l16 7v8q-4 6-8 3-8-6-8-18z" fill="#444" stroke-width="2" /><ellipse cx="665" cy="536" rx="5" ry="7" fill="#8b9490" stroke="none" />
            <path d="M648 543L678 555Q681 557 681 561V607L649 593Q646 591 646 587V546z" fill="#8a8878" stroke-width="2.500" /><path d="M647 570l11 3v12l12 5v-11l11 4v24l-32-14z" fill="#8b9a9a" stroke-width="1.500" />
            <path d="M682 588l8 3v14l-8 3z" fill="#0000b4" stroke-width="1.500" />
            <path d="M863 594l10-4v22l-10-6z" fill="#0000a0" stroke-width="2" /><path d="M874 564L909 554 913 557V598L911 601 873 613 870 608V568z" fill="#a19a89" stroke-width="2.500" /><path d="M871 590l14-5v7l14-4v-8l13-4v24l-39 12z" fill="#9eb2bc" stroke-width="1.500" />
            <g v-for="b in bolts" :key="b[0] + '-' + b[1]" stroke="#222" stroke-width="2"><ellipse :cx="b[0]" :cy="b[1]" rx="4" ry="5" fill="#2c78c0" /><circle :cx="b[0]" :cy="b[1]" r="1.500" fill="#7cc8f0" stroke="none" /></g>
          </g>

          <g stroke-linejoin="round">
            <path d="M835 347l10-2 8 4v6h-18z" fill="#c22" stroke="#333" stroke-width="2" />
            <path d="M538 404L789 327 1041 442V465L771 545 763 547 561 455V437L538 427z" fill="#dc5a50" />
            <path d="M545 406L789 332 1030 443 789 514z" fill="#ff6e62" />
            <path d="M545 406L788 333V349L569 416z" fill="#a8443e" />
            <path d="M791 334L1030 443 986 456 791 366z" fill="#a8443e" />
            <path d="M835 356v22M846 360v10" stroke="#dc5a50" stroke-width="4" />
            <path d="M595 427L790 368 813 364 815 374 630 432z" fill="#dc5a50" /><path d="M780 354l12-5 22 12v14l-34 10z" fill="#ff6e62" /><path d="M780 371l33-11 2 14-35 12z" fill="#dc5a50" />
            <path d="M620 433L793 385 833 387 984 457 789 512 615 437z" fill="#ff8078" stroke="#a04848" stroke-width="1" />
            <path d="M668 470l62-44 60-10v25l-60 30zM790 489l60-35 70-22 50 22-60 22zM846 500l74-40 50-2-100 39z" fill="#ff6e62" opacity=".75" /><path d="M668 460l56-30-30 30zM760 497l30-30 100-30-20 25z" fill="#ff746a" opacity=".7" />
            <path d="M862 400L985 457" stroke="#8f3e42" stroke-width="1" />
            <path d="M890 410l20-12h8l2 13-18 4z" fill="#ff6e62" stroke="#dc5a50" />
            <path d="M541 408L785 519V539L764 544 564 453V436L541 426z" fill="#923a33" /><path d="M795 520L1037 449V463L795 534z" fill="#a8443e" />
            <path d="M540 405L788 516 1038 444" fill="none" stroke="#dc5a50" stroke-width="4" />
            <path d="M539 404L789 328 1040 443" fill="none" stroke="#e8695e" stroke-width="2" />
            <path d="M766 532v13l19-6-14-8z" fill="#a8443e" stroke="#dc5a50" stroke-width="3" />
            <ellipse cx="663" cy="482" rx="4.500" ry="6.500" fill="#dc5a50" /><ellipse cx="664" cy="483" rx="2.500" ry="4" fill="#ff6e62" />
            <g><ellipse cx="847" cy="411" rx="20" ry="6.500" fill="#f0a0a0" stroke="#a04848" /><path d="M832 378h29v33q-14 9-29 0z" fill="url(#purple)" /><path d="M831 370h31v10q-15 8-31 0z" fill="#dc5a50" /></g>
            <g><ellipse cx="936" cy="452" rx="20" ry="6.500" fill="#f0a0a0" stroke="#a04848" /><path d="M921 420h29v33q-14 9-29 0z" fill="url(#purple)" /><path d="M920 411h32v10q-15 8-32 0z" fill="#dc5a50" /></g>
            <path d="M637 440h20v15l-20-9zM719 478h27v17l-27-12z" fill="#7030a0" /><path d="M626 433h33v8q-16 8-33 0zM716 474h33v8q-16 8-33 0z" fill="#dc5a50" />
            <path d="M640 448l22 9M722 485l28 12" stroke="#dc5a50" stroke-width="4" />
            <g fill="#ffc800" stroke="#333" stroke-width="1"><ellipse cx="846" cy="371" rx="15" ry="6" /><ellipse cx="935" cy="412" rx="15" ry="6" /><ellipse cx="643" cy="434" rx="15.500" ry="5.500" /><ellipse cx="733" cy="474" rx="16" ry="6" /></g>
          </g>

          <g>
            <path d="M1136 520v19q25 19 50 0v-19z" fill="#b8660c" /><path d="M1159 520h20v26q-9 3-20 3z" fill="#e07b00" /><path d="M1179 520h7v20l-7 5z" fill="#d8860f" />
            <ellipse cx="1161" cy="520" rx="25" ry="9.500" fill="#ffc800" stroke="#333" />
          </g>

          <g fill="none" stroke="#f2e6e6" stroke-width="1" shape-rendering="crispEdges">
            <path d="M789.500 428V537M791 536L884 509M791 475L841 459.500V521M791 475L831.500 494V556M850 525L883 541 831 556M798 541L868 574" />
          </g>
          <path d="M880 506l11 1-10 6zM861 573l3-5 9 8z" fill="#eee" />
          <path d="M786 427l3.500-13 3.500 13z" fill="#0000c8" />
          <g class="axis"><text x="785" y="412" fill="#0000e0">Z</text><text x="893" y="506" fill="#f0e8e8">Y</text><text x="874" y="582" fill="#fff">X</text></g>

          <g shape-rendering="crispEdges">
            <path d="M505 428H540V429H505zM1047 428H1491V429H1047zM1015 237H1016V396H1015zM1015 530H1016V901H1015z" fill="#fff" /><path d="M540 428H983V429H540z" fill="#137c9c" /><path d="M1015 460H1016V530H1015z" fill="#4a9fc0" />
          </g>
          <circle cx="1015.500" cy="429.500" r="11" fill="none" stroke="#fff" stroke-dasharray="13 4.280" stroke-dashoffset="-2" />
          <path d="M1002 430.500H1030M1016.500 416V444" stroke="#000" stroke-width="2" /><path d="M1001 429.500H1030M1015.500 415V444" stroke="#fff" />

          <path d="M338 825l12-7 20 4-2 20-11 10-19-8z" fill="#999" stroke="#ccc" /><path d="M338 825l19 4-1 23M357 829l13-7" fill="none" stroke="#ddd" />
          <path d="M337 842V812" stroke="#1515d8" stroke-width="2" /><path d="M337 808l3 8h-6z" fill="#1515d8" /><path d="M337 843l18 8" stroke="#d82020" stroke-width="2" /><path d="M352 847l10 7-11-1z" fill="#d82020" /><path d="M337 843l31-10" stroke="#eee" /><circle cx="337" cy="843" r="4" fill="#ddd" />
          <g class="axis"><text x="333" y="808" fill="#2020e8">Z</text><text x="360" y="860" fill="#e02020">X</text></g>
        </svg>
      </section>
    </main>

    <footer class="status"><svg class="i" viewBox="0 0 16 16" v-html="icons.flags" /><svg class="i" viewBox="0 0 16 16" v-html="icons.frame" /></footer>

    <form class="dialog" @submit.prevent>
      <div class="dhead"><svg class="i" viewBox="0 0 16 16" v-html="icons.gear" /><h2>测量体</h2>
        <button type="button" class="ib" aria-label="重置"><svg class="i s" viewBox="0 0 16 16" v-html="icons.reset" /></button>
        <button type="button" class="ib" aria-label="关闭"><svg class="i" viewBox="0 0 16 16" v-html="icons.x" /></button></div>
      <div class="dbody">
        <div class="pick"><button type="button" class="pickrow"><svg class="i" viewBox="0 0 16 16"><path d="M8 2v12M2 5l12 6M14 5L2 11" stroke="#e02020" stroke-width="2.400" /></svg>选择体 (0)</button>
          <button type="button" class="pickbtn" aria-label="体"><svg viewBox="0 0 24 24"><path d="M12 1l10 5v11l-10 6-10-6V6z" fill="#ffb81a" stroke="#d24a10" /><path d="M12 11l10-5v11l-10 6z" fill="#e0800c" stroke="#e0401a" /><path d="M2 6l10 5" stroke="#e0401a" /></svg></button></div>
        <div class="sec">
          <div class="row"><label for="mat" class="in">请选择材料</label><span class="sel field"><select id="mat" v-model="material"><option>ABS</option></select></span></div>
          <div class="row off"><label for="den">密度</label><span class="field vu"><input id="den" value="1.04" disabled><span class="sel"><select aria-label="密度单位" disabled><option>kg/m</option></select></span></span></div>
        </div>
        <div class="sec">
          <div v-for="m in measures" :key="m.id" class="row"><label :for="m.id">{{ m.label }}</label>
            <span class="field vu"><input :id="m.id" v-model="m.value" :class="{ hl: m.hl }"><span class="sel"><select :aria-label="m.label + '单位'"><option>{{ m.unit }}</option></select></span></span></div>
        </div>
        <div class="sec">
          <div class="row"><label for="lib">编辑材料库</label><button id="lib" type="button" class="libbtn"><svg viewBox="0 0 32 32"><path :d="rosette" fill="#ffe070" stroke="#e82020" stroke-width="1.200" /><circle cx="16" cy="16" r="7.500" fill="#ccfaff" stroke="#2a80d8" stroke-width="1.600" /></svg></button></div>
        </div>
      </div>
      <button type="button" class="more" aria-label="更多"><i class="caret wide" /></button>
      <div class="dfoot"><button disabled>确定</button><button type="button" disabled>应用</button><button type="button" class="cancel">取消</button></div>
    </form>
  </div>
</template>

<style>
html, body { margin: 0; background: #fdfdfd; }
</style>

<style scoped>
.app { position: relative; min-height: 100vh; box-sizing: border-box; display: flex; flex-direction: column; border-left: 1px solid #a0a0a0; background: #fdfdfd; color: #000; font: 14px/20px "Noto Sans", "Noto Sans CJK SC", sans-serif; overflow: hidden; }
button, input, select { font: inherit; color: inherit; margin: 0; padding: 0; border: 0; background: none; border-radius: 0; outline: none; }
h1, h2 { margin: 0; font-weight: 400; }
ul { margin: 0; padding: 0; list-style: none; }
svg { display: block; flex: none; fill: none; }
.i { width: 16px; height: 16px; }
.i.s { width: 14px; height: 14px; }
.ib { display: flex; align-items: center; gap: 5px; white-space: nowrap; }
.caret { display: block; flex: none; width: 8px; height: 4px; background: #000; clip-path: polygon(0 0, 100% 0, 50% 100%); }
.caret.wide { width: 12px; height: 6px; }
.caret.bar { height: 8px; clip-path: polygon(0 0, 100% 0, 100% 15%, 0 15%, 0 45%, 100% 45%, 50% 100%, 0 45%); }

.titlebar { display: flex; align-items: center; height: 37px; }
.nx { width: 46px; padding-left: 1px; box-sizing: border-box; font-size: 24px; line-height: 24px; font-weight: 700; color: #7f8aa2; }
.grp { display: flex; align-items: center; gap: 7px; height: 28px; padding: 0 6px; border-left: 1px solid #d0d8d6; }
.windows { padding: 0 10px 0 5px; }
.title { display: flex; flex: 1; gap: 24px; font-size: 15px; white-space: nowrap; }
.ver { margin-left: -10px; }
.siemens { color: #009494; font: 800 16px/20px "Open Sans", sans-serif; }
.winbtns { display: flex; gap: 14px; margin: 0 10px 0 26px; }

.tabbar { display: flex; height: 32px; background: #d9d9d9; font-size: 16px; white-space: nowrap; }
.file { width: 88px; margin-right: 2px; background: #4f9db8; color: #fff; padding-right: 5px; }
.tab { padding: 0 10px; margin-right: 1px; }
.tab.latin { padding: 0 12px; }
.tab.active { background: #fdfdfd; color: #0a7094; border-top: 1px solid #b0b0b0; }
.find { display: flex; flex: 1; align-items: center; justify-content: flex-end; gap: 10px; padding-right: 10px; }
.search { display: flex; align-items: center; box-sizing: border-box; width: 157px; height: 24px; margin-right: 2px; padding: 0 3px 0 1px; border: 1px solid #a8b0ae; background: #fdfdfd; }
.search input { flex: 1; min-width: 0; font-size: 14px; }
.search input::placeholder { color: #a8a8a8; }

.ribbon { display: flex; justify-content: space-between; border-bottom: 1px solid #d0d8d6; }
.rgroup { margin: 4px 0; padding-left: 6px; padding-right: 10px; border-right: 1px solid #d0d8d6; }
.tools { display: flex; height: 80px; }
.big { display: flex; flex-direction: column; align-items: center; padding: 0 4px; margin-right: 1px; white-space: nowrap; }
.bi { width: 34px; height: 34px; margin-bottom: 4px; }
.col { display: grid; grid-template-rows: repeat(3, 26px); margin-left: 9px; margin-top: -2px; }
.big + .col { margin-left: 5px; }
.small { display: flex; align-items: center; gap: 4px; white-space: nowrap; }
.gname { display: flex; align-items: center; justify-content: center; padding-top: 1px; color: #0a7094; line-height: 16px; }
.gname span { flex: 1; padding-right: 10px; text-align: center; }
.ropt, .topt { align-self: flex-end; padding: 8px; }

.toolbar { display: flex; align-items: center; height: 35px; border-bottom: 1px solid #909090; }
.menu { display: flex; align-items: center; gap: 5px; height: 28px; padding: 0 5px 0 7px; border-right: 1px solid #d0d8d6; white-space: nowrap; }
.sel { display: grid; align-items: center; }
.sel > select, .sel::after { grid-area: 1 / 1; }
.sel > select { appearance: none; width: 100%; height: 100%; }
.sel::after { content: ""; width: 10px; height: 5px; margin-right: 5px; justify-self: end; background: #000; clip-path: polygon(0 0, 100% 0, 50% 100%); pointer-events: none; }
.flt, .scp { box-sizing: border-box; height: 24px; border: 1px solid #a0a8a6; padding-left: 2px; }
.flt { width: 167px; margin: 0 9px 0 13px; }
.scp { width: 176px; margin-right: 8px; }
.icons { display: flex; align-items: center; gap: 9px; padding-right: 10px; height: 28px; border-right: 1px solid #d0d8d6; }
.views { gap: 10px; padding-left: 12px; }
.topt { margin-left: auto; }

.work { display: flex; flex: 1; min-height: 0; }
.rail { width: 28px; background: #d9d9d9; border-right: 1px solid #a0a0a0; }
.rb { display: grid; place-items: center; width: 28px; height: 42px; }
.rb.first { height: 41px; padding-bottom: 10px; border-bottom: 1px solid #a0a0a0; }
.rb.on { width: 29px; height: 44px; background: #fdfdfd; border-bottom: 1px solid #a0a0a0; }
.rg { padding-bottom: 12px; }
.ri { width: 24px; height: 24px; }

.panel { display: flex; flex-direction: column; width: 235px; padding: 0 9px 6px 6px; border-right: 1px solid #909090; }
.phead { display: flex; align-items: center; justify-content: space-between; height: 31px; padding: 2px 7px 0 4px; box-sizing: border-box; }
.phead h2 { font-size: 15px; line-height: 20px; }
.pmax { width: 14px; height: 13px; border: 1px solid #000; border-top-width: 2px; }
.box { display: flex; flex: 1; flex-direction: column; border: 1px solid #d0d8d6; border-bottom: 0; }
.thead { display: flex; align-items: center; gap: 19px; margin: 0 2px; padding: 2px 5px; border-bottom: 1px solid #d0d8d6; font-size: 15px; }
.tri { width: 11px; height: 6px; background: #000; clip-path: polygon(50% 0, 100% 100%, 0 100%); }
.tree { flex: 1; font-size: 15px; }
.tree li { display: flex; align-items: center; height: 24px; gap: 3px; }
.tree .sect { padding-left: 11px; gap: 4px; }
.elbow { align-self: flex-end; width: 5px; height: 12px; border: 1px dotted #999; border-width: 1px 0 0 1px; }
.tree .root { padding-left: 5px; }
.tree .root b { font-size: 16px; }
.tree .kid { padding-left: 24px; }
.root .pm, .kid .pm, .dots { margin-right: 3px; }
.tree input { appearance: none; flex: none; width: 12px; height: 12px; border: 1px solid #000; background: #fff; display: grid; place-items: center; }
.tree input:checked::after { content: ""; width: 11px; height: 10px; background: #e01818; clip-path: polygon(0 45%, 25% 45%, 38% 65%, 85% 0, 100% 10%, 45% 100%, 30% 100%); }
.pm { width: 11px; height: 11px; border: 1px solid #c0c0c0; box-sizing: border-box; line-height: 8px; font-size: 12px; }
.dots { width: 11px; border-top: 1px dotted #888; }
.tree .kid { background: repeating-linear-gradient(#999 0 1px, transparent 1px 2px) 29px 0 / 1px 6px no-repeat; }
.hscroll { display: flex; align-items: center; height: 22px; padding: 0 1px 2px 2px; }
.hscroll button { width: 20px; height: 19px; display: grid; place-items: center; }
.hscroll svg { width: 16px; height: 16px; }
.hscroll .r { margin-left: auto; background: #d9d9d9; }
.thumb { width: 71px; height: 19px; background: #d6d6d6; }
.split { height: 3px; border: 1px solid #a8a8a8; background: #d9d9d9; }
.acc { display: flex; align-items: center; justify-content: space-between; height: 28px; padding: 0 5px 0 6px; border-bottom: 2px solid #d0d8d6; color: #0a7094; font-size: 18px; }

.view { display: flex; flex: 1; flex-direction: column; min-width: 0; padding-right: 3px; }
.doctabs { border-bottom: 2px solid #4f9db8; }
.doctab { display: flex; align-items: center; gap: 5px; height: 24px; padding: 0 4px 0 6px; background: #4f9db8; color: #fff; font-size: 16px; white-space: nowrap; }
.doctab .s { width: 12px; height: 12px; }
.g { color: #c8b8a8; }
.canvas { flex: 1; min-height: 0; width: calc(100% - 1px); background: #000; margin-left: 1px; }
.axis { font: 12px "Noto Sans", sans-serif; }
.status { display: flex; justify-content: flex-end; align-items: center; gap: 4px; height: 22px; padding-right: 57px; border-top: 1px solid #a0a0a0; border-bottom: 8px solid #4f9db8; }

.dialog { position: absolute; left: 124px; top: 289px; width: 380px; box-sizing: border-box; background: #fdfdfd; border: 1px solid #c8d0ce; border-top: 0; font-size: 15px; }
.dhead { display: flex; align-items: center; gap: 8px; height: 27px; margin: 0 -1px; padding: 0 8px; background: #4f9db8; color: #fff; }
.dhead h2 { flex: 1; font-size: 18px; line-height: 24px; }
.dbody { padding: 8px 9px 0; }
.pick { display: flex; gap: 2px; padding-bottom: 2px; }
.pickrow { display: flex; flex: 1; align-items: center; gap: 4px; height: 32px; background: #ffe070; }
.pickbtn { display: grid; place-items: center; width: 32px; background: #ffe070; }
.pickbtn svg { width: 24px; height: 24px; }
.sec { display: grid; gap: 2px; padding: 3px 0 2px; border-top: 1px solid #d0d8d6; }
.row { display: flex; align-items: center; justify-content: space-between; }
.in { padding-left: 2px; }
.off { color: #b0b0b0; }
.field { box-sizing: border-box; width: 152px; height: 28px; border: 1px solid #a0a8a6; padding-left: 4px; }
.off .field { border-color: #d0d8d6; }
.vu { display: flex; align-items: center; }
.vu input { width: 81px; height: 20px; }
.vu input.hl { width: 78px; margin-right: 3px; background: #0078d7; color: #fff; }
.vu input:disabled { color: #808080; }
.vu .sel { flex: 1; margin-left: 5px; }
.off .sel::after { background: #b0b0b0; }
select:disabled { opacity: 1; color: #b0b0b0; }
.libbtn { display: grid; place-items: center; width: 40px; height: 40px; border: 1px solid #a0a8a6; }
.libbtn svg { width: 32px; height: 32px; background: #d9d9d9; }
.more { display: grid; place-items: center; width: 100%; height: 15px; padding-top: 3px; }
.dfoot { display: flex; justify-content: flex-end; gap: 5px; margin: 0 5px; padding: 8px 10px 10px; border-top: 1px solid #d0d8d6; }
.dfoot button { width: 60px; height: 28px; border: 1px solid #a0a8a6; color: #a8a8a8; }
.dfoot .cancel { background: #d9d9d9; color: #000; }
</style>
